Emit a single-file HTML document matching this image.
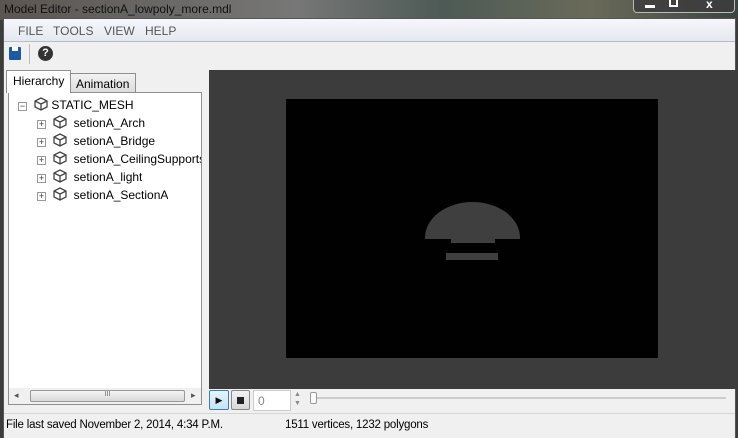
<!DOCTYPE html>
<html><head><style>
*{margin:0;padding:0;box-sizing:border-box}
body{width:738px;height:438px;overflow:hidden;position:relative;font-family:"Liberation Sans",sans-serif;font-size:12px;background:#3a3d3a}
.a{position:absolute}
.title{left:0;top:0;width:738px;height:20px;background:linear-gradient(90deg,#5a5550 0%,#777 40%,#4d5a55 60%,#6a6a5a 80%,#3a4440 100%)}
.tt{left:4px;top:2px;color:#111;font-size:12px}
.frame{left:3px;top:18px;width:733px;height:420px;background:#f0f0f0;border:1px solid #555}
.menu{left:4px;top:19px;width:731px;height:23px;background:linear-gradient(#f6f7fb,#e4e8f0);border-bottom:1px solid #b8bcc4;color:#555}
.menu span{position:absolute;top:5px}
.tree{left:8px;top:92px;width:194px;height:313px;background:#fff;border:1px solid #8e8f8f}
.row{position:absolute;left:0;height:18px;line-height:18px;color:#000;font-size:12px;white-space:nowrap;overflow:hidden}
.pm{position:absolute;width:9px;height:9px;border:1px solid #999;font-size:9px;line-height:7px;text-align:center;color:#333;background:#fff}
</style></head><body>
<div class="a title"></div>
<div class="a tt">Model Editor - sectionA_lowpoly_more.mdl</div>
<div class="a" style="left:633px;top:0;width:102px;height:13px;border:1px solid #bbb;border-top:0;border-radius:0 0 4px 4px;background:rgba(60,60,60,.8)"></div>
<div class="a" style="left:645px;top:5px;width:10px;height:3px;background:#fff"></div>
<div class="a" style="left:669px;top:0;width:9px;height:7px;border:2px solid #fff;border-top:0"></div>
<div class="a" style="left:706px;top:-3px;color:#fff;font-weight:bold;font-size:12px">x</div>
<div class="a frame"></div>
<div class="a menu"><span style="left:14px">FILE</span><span style="left:49px">TOOLS</span><span style="left:100px">VIEW</span><span style="left:141px">HELP</span></div>
<div class="a" style="left:9px;top:47px;width:12px;height:13px;background:#1c5aa6;border-radius:1px"></div>
<div class="a" style="left:12px;top:47px;width:6px;height:4px;background:#fff"></div>
<div class="a" style="left:29px;top:44px;width:1px;height:20px;background:#bbb"></div>
<div class="a" style="left:38px;top:46px;width:15px;height:15px;border-radius:50%;background:#333;color:#fff;font-weight:bold;font-size:11px;text-align:center;line-height:15px">?</div>
<div class="a" style="left:6px;top:70px;width:65px;height:23px;background:#fff;border:1px solid #8e8f8f;border-bottom:0;padding:3px 0 0 6px;z-index:2">Hierarchy</div>
<div class="a" style="left:70px;top:73px;width:66px;height:20px;background:linear-gradient(#f2f2f2,#dcdcdc);border:1px solid #8e8f8f;padding:3px 0 0 5px">Animation</div>
<div class="a tree">
<div class="pm" style="left:9px;top:9px">−</div>
<div class="row" style="left:25px;top:3px"><svg width="14" height="14" viewBox="0 0 14 14" style="vertical-align:-2px"><path d="M7 1L13 4V10L7 13L1 10V4Z M1 4L7 7L13 4 M7 7V13" fill="none" stroke="#444" stroke-width="1.3"/></svg> STATIC_MESH</div>
<div class="pm" style="left:28px;top:27px">+</div><div class="row" style="left:44px;top:21px"><svg width="14" height="14" viewBox="0 0 14 14" style="vertical-align:-2px"><path d="M7 1L13 4V10L7 13L1 10V4Z M1 4L7 7L13 4 M7 7V13" fill="none" stroke="#444" stroke-width="1.3"/></svg>&nbsp; setionA_Arch</div>
<div class="pm" style="left:28px;top:45px">+</div><div class="row" style="left:44px;top:39px"><svg width="14" height="14" viewBox="0 0 14 14" style="vertical-align:-2px"><path d="M7 1L13 4V10L7 13L1 10V4Z M1 4L7 7L13 4 M7 7V13" fill="none" stroke="#444" stroke-width="1.3"/></svg>&nbsp; setionA_Bridge</div>
<div class="pm" style="left:28px;top:63px">+</div><div class="row" style="left:44px;top:57px;width:148px"><svg width="14" height="14" viewBox="0 0 14 14" style="vertical-align:-2px"><path d="M7 1L13 4V10L7 13L1 10V4Z M1 4L7 7L13 4 M7 7V13" fill="none" stroke="#444" stroke-width="1.3"/></svg>&nbsp; setionA_CeilingSupports</div>
<div class="pm" style="left:28px;top:81px">+</div><div class="row" style="left:44px;top:75px"><svg width="14" height="14" viewBox="0 0 14 14" style="vertical-align:-2px"><path d="M7 1L13 4V10L7 13L1 10V4Z M1 4L7 7L13 4 M7 7V13" fill="none" stroke="#444" stroke-width="1.3"/></svg>&nbsp; setionA_light</div>
<div class="pm" style="left:28px;top:99px">+</div><div class="row" style="left:44px;top:93px"><svg width="14" height="14" viewBox="0 0 14 14" style="vertical-align:-2px"><path d="M7 1L13 4V10L7 13L1 10V4Z M1 4L7 7L13 4 M7 7V13" fill="none" stroke="#444" stroke-width="1.3"/></svg>&nbsp; setionA_SectionA</div>
<div class="a" style="left:0;top:295px;width:192px;height:16px;background:#f0f0f0"></div>
<div class="a" style="left:5px;top:297px;font-size:9px;color:#555">◂</div>
<div class="a" style="left:182px;top:297px;font-size:9px;color:#555">▸</div>
<div class="a" style="left:21px;top:297px;width:155px;height:12px;border:1px solid #999;border-radius:2px;background:linear-gradient(#f4f4f4,#d8d8d8);font-size:7px;text-align:center;color:#666">III</div>
</div>
<div class="a" style="left:209px;top:70px;width:529px;height:319px;background:#3c3c3c"></div>
<div class="a" style="left:286px;top:99px;width:372px;height:259px;background:#010101"></div>
<div class="a" style="left:425px;top:202px;width:95px;height:37px;background:#3f3f3f;border-radius:48px 48px 0 0/36px 36px 0 0"></div>
<div class="a" style="left:451px;top:238px;width:44px;height:5px;background:#3f3f3f"></div>
<div class="a" style="left:446px;top:253px;width:52px;height:7px;background:#3f3f3f"></div>
<div class="a" style="left:209px;top:390px;width:20px;height:20px;border:1px solid #3c7fb1;border-radius:2px;background:linear-gradient(#e5f4fc,#c4e5f6);font-size:9px;text-align:center;line-height:18px;color:#111">▶</div>
<div class="a" style="left:231px;top:390px;width:19px;height:20px;border:1px solid #888;border-radius:2px;background:linear-gradient(#f2f2f2,#d8d8d8)"><div style="margin:6px 5px;width:7px;height:7px;background:#222"></div></div>
<div class="a" style="left:253px;top:390px;width:38px;height:21px;border:1px solid #ccc;background:#fff;color:#888;padding:3px 4px">0</div>
<div class="a" style="left:294px;top:390px;font-size:7px;color:#888;line-height:9px">▲<br>▼</div>
<div class="a" style="left:313px;top:397px;width:413px;height:2px;background:#ccc"></div>
<div class="a" style="left:310px;top:392px;width:7px;height:12px;border:1px solid #999;border-radius:2px;background:#fafafa"></div>
<div class="a" style="left:4px;top:413px;width:731px;height:25px;background:#f0f0f0;border-top:1px solid #d5d5d5"></div>
<div class="a" style="left:6px;top:419px;color:#000;font-size:11.5px;letter-spacing:-0.2px">File last saved November 2, 2014, 4:34 P.M.</div>
<div class="a" style="left:285px;top:419px;color:#000;font-size:11.5px;letter-spacing:-0.2px">1511 vertices, 1232 polygons</div>
</body></html>
